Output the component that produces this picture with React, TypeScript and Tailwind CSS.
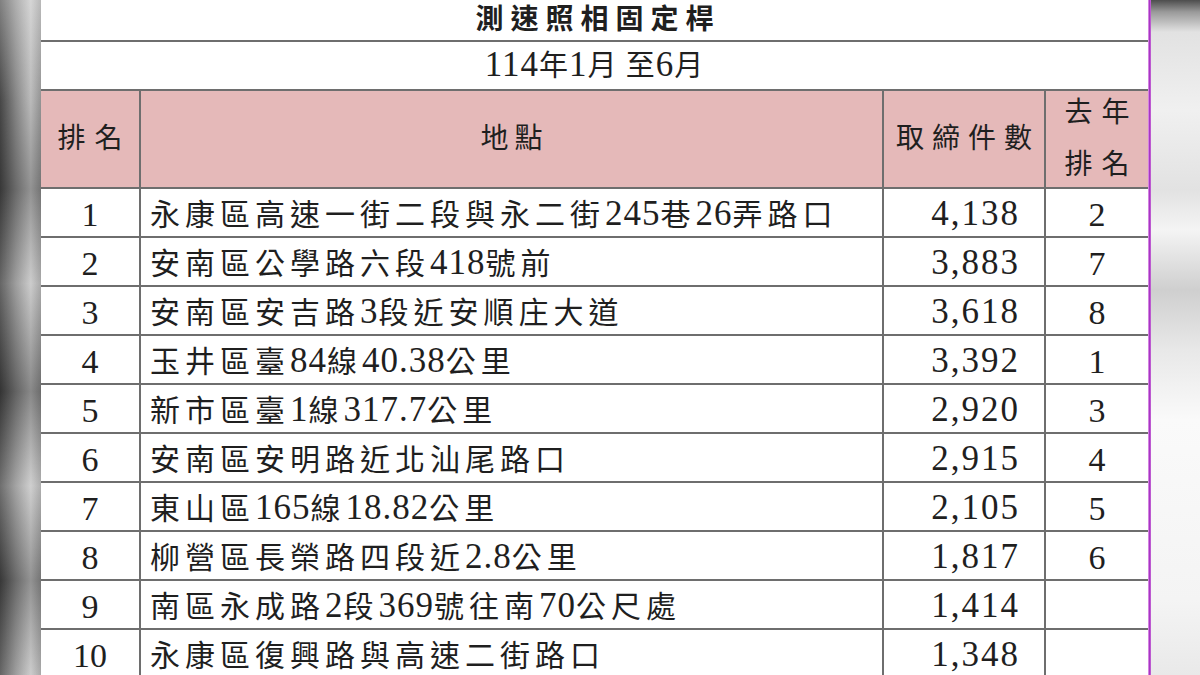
import React from 'react';

const rows: string[][] = [
  ['1', '永康區高速一街二段與永二街245巷26弄路口', '4,138', '2'],
  ['2', '安南區公學路六段418號前', '3,883', '7'],
  ['3', '安南區安吉路3段近安順庄大道', '3,618', '8'],
  ['4', '玉井區臺84線40.38公里', '3,392', '1'],
  ['5', '新市區臺1線317.7公里', '2,920', '3'],
  ['6', '安南區安明路近北汕尾路口', '2,915', '4'],
  ['7', '東山區165線18.82公里', '2,105', '5'],
  ['8', '柳營區長榮路四段近2.8公里', '1,817', '6'],
  ['9', '南區永成路2段369號往南70公尺處', '1,414', ''],
  ['10', '永康區復興路與高速二街路口', '1,348', ''],
];

const font = "font-['Liberation_Serif','Noto_Sans_CJK_TC',serif]";

// digits in the source are tall and narrow, so give them a bigger size than the CJK text
const Mixed = ({ text }: { text: string }) => (
  <>
    {text.split(/([0-9.,]+)/).map((part, i) =>
      /^[0-9.,]+$/.test(part) ? (
        <span key={i} className="text-[35px] tracking-[1px]">
          {part}
        </span>
      ) : (
        <span key={i}>{part}</span>
      ),
    )}
  </>
);

const App: React.FC = () => {
  return (
    <div className={`flex h-[675px] w-[1200px] overflow-hidden bg-white text-[#1f1f1f] ${font}`}>
      {/* blurred video edge, left */}
      <div className="w-[41px] shrink-0 bg-[linear-gradient(to_right,#4a4a4a,#8f8f8f_40%,#c4c4c4_75%,#9a9a9a)]">
        <div className="h-full w-full bg-[linear-gradient(to_bottom,rgba(255,255,255,0.3),rgba(0,0,0,0.05)_15%,rgba(0,0,0,0.25)_28%,rgba(255,255,255,0.15)_42%,rgba(0,0,0,0.3)_58%,rgba(255,255,255,0.2)_72%,rgba(0,0,0,0.25)_86%,rgba(255,255,255,0.15))]" />
      </div>

      {/* table */}
      <div className="flex w-[1107px] shrink-0 flex-col">
        <div className="flex h-[42px] shrink-0 items-center justify-center border-b-2 border-[#6e6e6e]">
          <span className="pl-[7px] text-[28px] font-bold tracking-[7px]">測速照相固定桿</span>
        </div>
        <div className="flex h-[49px] shrink-0 items-center justify-center border-b-2 border-[#6e6e6e]">
          <span className="text-[29px] tracking-[1px]">
            <Mixed text="114年1月 至6月" />
          </span>
        </div>

        <div className="flex h-[98px] shrink-0 border-b-2 border-[#6e6e6e] bg-[#e5b9b9] text-[28px]">
          <div className="flex w-[100px] items-center justify-center border-r-2 border-[#6e6e6e] pl-[9px] tracking-[9px]">
            排名
          </div>
          <div className="flex w-[743px] items-center justify-center border-r-2 border-[#6e6e6e] pl-[6px] tracking-[6px]">
            地點
          </div>
          <div className="flex w-[162px] items-center justify-center border-r-2 border-[#6e6e6e] pl-[8px] tracking-[8px]">
            取締件數
          </div>
          <div className="flex flex-1 flex-col items-center justify-center pl-[9px] leading-[52px] tracking-[9px]">
            <span>去年</span>
            <span>排名</span>
          </div>
        </div>

        {rows.map((r, idx) => (
          <div key={idx} className="flex h-[49px] shrink-0 border-b-2 border-[#6e6e6e] text-[30px]">
            <div className="flex w-[100px] items-center justify-center border-r-2 border-[#6e6e6e] pt-[3px] text-[34px]">
              {r[0]}
            </div>
            <div className="flex w-[743px] items-center border-r-2 border-[#6e6e6e] pl-[9px] pt-[3px] tracking-[5px] whitespace-nowrap">
              <Mixed text={r[1]} />
            </div>
            <div className="flex w-[162px] items-center justify-end border-r-2 border-[#6e6e6e] pr-[24px] pt-[3px] text-[35px] tracking-[2px]">
              {r[2]}
            </div>
            <div className="flex flex-1 items-center justify-center pt-[3px] text-[34px]">{r[3]}</div>
          </div>
        ))}
      </div>

      {/* magenta frame line */}
      <div className="w-[3px] shrink-0 bg-[linear-gradient(to_right,#e9a8f0,#a736c4_50%,#c76bd6)]" />

      {/* blurred video edge, right */}
      <div className="flex-1 bg-[linear-gradient(to_bottom,#4d4d4d,#9a9a9a_12px,#e2e2e2_32px,#f0f0f0_110px,#e2e2e2_190px,#f4f4f4_230px,#cfcfcf_290px,#e8e8e8_350px,#fafafa_420px,#f4f4f4_600px,#e9e9e9)]" />
    </div>
  );
};

export default App;
